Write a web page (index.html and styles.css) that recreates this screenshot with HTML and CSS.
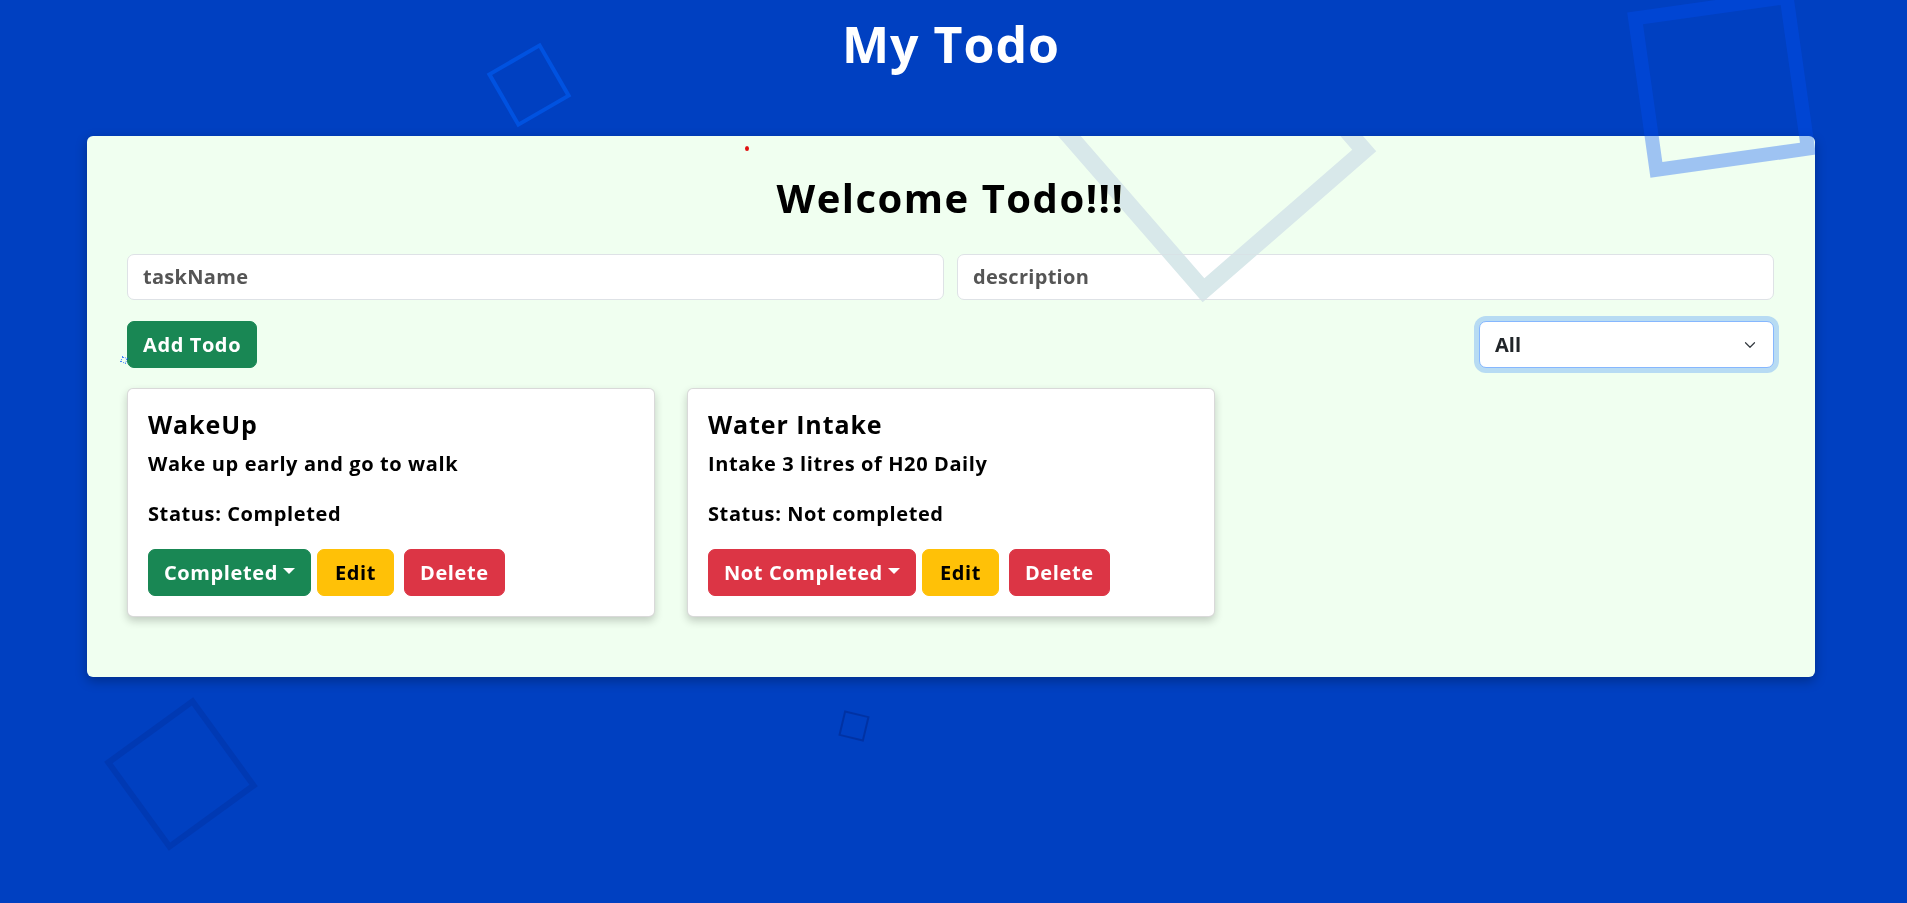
FILE: index.html
```html
<!DOCTYPE html>
<html lang="en">
<head>
<meta charset="utf-8">
<title>My Todo</title>
<link rel="stylesheet" href="styles.css">
</head>
<body>
<div class="page">
  <h1 class="app-title">My Todo</h1>
  <main class="board">
    <h2 class="welcome">Welcome Todo!!!</h2>
    <form class="entry">
      <input class="field" type="text" placeholder="taskName">
      <input class="field" type="text" placeholder="description">
    </form>
    <div class="toolbar">
      <button class="btn btn-success add-btn" type="button">Add Todo</button>
      <div class="select-wrap">
        <select class="filter">
          <option>All</option>
          <option>Completed</option>
          <option>Not Completed</option>
        </select>
        <svg class="chev" width="16" height="12" viewBox="0 0 16 16" aria-hidden="true"><path d="M2 5l6 6 6-6" fill="none" stroke="#343a40" stroke-width="1.6" stroke-linecap="round" stroke-linejoin="round"/></svg>
      </div>
    </div>
    <div class="cards">
      <article class="todo-card">
        <h5 class="card-title">WakeUp</h5>
        <p class="card-text">Wake up early and go to walk</p>
        <p class="card-text">Status: Completed</p>
        <div class="actions">
          <button class="btn btn-success dropdown-toggle status-btn" type="button">Completed</button>
          <button class="btn btn-warning edit-btn" type="button">Edit</button>
          <button class="btn btn-danger" type="button">Delete</button>
        </div>
      </article>
      <article class="todo-card">
        <h5 class="card-title">Water Intake</h5>
        <p class="card-text">Intake 3 litres of H20 Daily</p>
        <p class="card-text">Status: Not completed</p>
        <div class="actions">
          <button class="btn btn-danger dropdown-toggle status-btn" type="button">Not Completed</button>
          <button class="btn btn-warning edit-btn" type="button">Edit</button>
          <button class="btn btn-danger" type="button">Delete</button>
        </div>
      </article>
    </div>
  </main>
</div>
<div class="shapes" aria-hidden="true">
  <span class="shape shape-a"></span>
  <span class="shape shape-b"></span>
  <span class="shape shape-c"></span>
  <span class="shape shape-d"></span>
  <span class="shape shape-e"></span>
  <span class="shape shape-f"></span>
  <span class="shape dot"></span>
</div>
</body>
</html>
```

FILE: styles.css
```css
* { box-sizing: border-box; }

html, body {
  margin: 0;
  background: #0040c1;
  min-height: 100%;
}

body {
  font-family: "Open Sans", "Liberation Sans", sans-serif;
  font-size: 20px;
  color: #000;
  overflow: hidden;
  height: 903px;
}

.page {
  padding: 14px 5px 0 0;
}

.app-title {
  margin: 0 0 62px;
  text-align: center;
  color: #fff;
  font-size: 50px;
  line-height: 60px;
  font-weight: 700;
  letter-spacing: 1px;
}

.board {
  width: 1728px;
  margin: 0 auto;
  background: #f0fff0;
  border-radius: 6px;
  padding: 38px 41px 60px 40px;
  box-shadow: 0 4px 12px rgba(0, 0, 0, 0.28);
}

.welcome {
  margin: 0 0 32px;
  text-align: center;
  font-size: 40px;
  line-height: 48px;
  font-weight: 700;
  letter-spacing: 1.5px;
}

.entry {
  display: grid;
  grid-template-columns: 1fr 1fr;
  gap: 13px;
  margin: 0;
}

.field {
  display: block;
  width: 100%;
  font: inherit;
  font-weight: 700;
  line-height: 30px;
  letter-spacing: 0.3px;
  padding: 7px 15px;
  border: 1px solid #dee2e6;
  border-radius: 7px;
  background: #fff;
  color: #212529;
  outline: none;
}

.field::placeholder {
  color: #555;
  opacity: 1;
  font-weight: 700;
}

.toolbar {
  display: flex;
  justify-content: space-between;
  align-items: center;
  margin-top: 21px;
}

.btn {
  font: inherit;
  font-weight: 700;
  font-size: 20px;
  line-height: 30px;
  letter-spacing: 0.6px;
  padding: 7.5px 15px;
  border: 1px solid transparent;
  border-radius: 7px;
  cursor: pointer;
  white-space: nowrap;
}

.btn-success { background: #198754; border-color: #198754; color: #fff; }
.btn-warning { background: #ffc107; border-color: #ffc107; color: #000; }
.btn-danger { background: #dc3545; border-color: #dc3545; color: #fff; }

.edit-btn { padding: 7.5px 17px; }

.dropdown-toggle::after {
  content: "";
  display: inline-block;
  margin-left: 0.255em;
  vertical-align: 0.255em;
  border-top: 0.3em solid;
  border-right: 0.3em solid transparent;
  border-left: 0.3em solid transparent;
}

.select-wrap {
  position: relative;
  width: 295px;
}

.filter {
  display: block;
  width: 100%;
  appearance: none;
  -webkit-appearance: none;
  font: inherit;
  font-weight: 700;
  line-height: 30px;
  padding: 7.5px 36px 7.5px 15px;
  border: 1px solid #86b7fe;
  border-radius: 7px;
  background: #fff;
  color: #212529;
  box-shadow: 0 0 0 5px rgba(13, 110, 253, 0.25);
  outline: none;
}

.chev {
  position: absolute;
  right: 16px;
  top: 18px;
  pointer-events: none;
}

.cards {
  display: flex;
  gap: 32px;
  margin-top: 20px;
}

.todo-card {
  width: 528px;
  background: #fff;
  border: 1px solid rgba(0, 0, 0, 0.15);
  border-radius: 6px;
  padding: 20px;
  box-shadow: 0 4px 8px rgba(0, 0, 0, 0.2);
}

.card-title {
  margin: 0 0 10px;
  font-size: 25px;
  line-height: 30px;
  font-weight: 700;
  letter-spacing: 0.9px;
}

.card-text {
  margin: 0 0 20px;
  font-size: 20px;
  line-height: 30px;
  font-weight: 700;
  letter-spacing: 0.6px;
}

.actions {
  display: flex;
}

.status-btn { margin-right: 6px; }
.edit-btn { margin-right: 10px; }

/* decorative floating squares */
.shapes {
  position: absolute;
  inset: 0;
  overflow: hidden;
  pointer-events: none;
}

.shape {
  position: absolute;
  display: block;
  z-index: 5;
}

.shape-a {
  left: 498px; top: 54px;
  width: 62px; height: 62px;
  border: 4px solid rgba(0, 100, 255, 0.5);
  transform: rotate(-30deg);
}

.shape-b {
  left: 1638px; top: 0;
  width: 167px; height: 167px;
  border: 14px solid rgba(0, 80, 245, 0.34);
  transform: rotate(-8deg);
}

.shape-c {
  left: 1099px; top: 25px;
  width: 230px; height: 230px;
  border: 17px solid #d8e8ea;
  mix-blend-mode: darken;
  transform: rotate(-41deg);
}

.shape-d {
  left: 126px; top: 719px;
  width: 110px; height: 110px;
  border: 6px solid rgba(0, 20, 100, 0.15);
  transform: rotate(-36deg);
}

.shape-e {
  left: 841px; top: 713px;
  width: 26px; height: 26px;
  border: 2px solid rgba(0, 20, 100, 0.3);
  transform: rotate(13.5deg);
}

.shape-f {
  left: 121px; top: 357px;
  width: 6px; height: 6px;
  border: 1px dotted rgba(0, 80, 255, 0.7);
  transform: rotate(20deg);
}

.dot {
  left: 745px; top: 146px;
  width: 4px; height: 5px;
  border-radius: 50%;
  background: #e01010;
}
```
